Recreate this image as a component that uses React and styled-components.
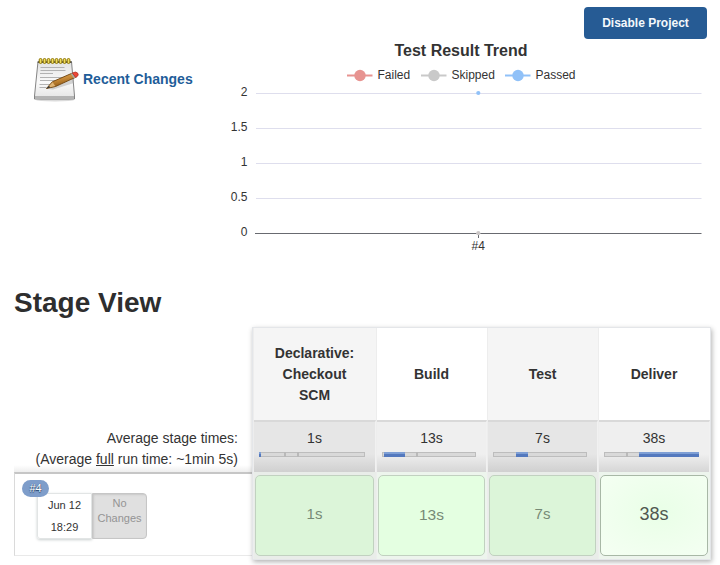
import React from "react";
import styled, { createGlobalStyle, css } from "styled-components";

const GlobalStyle = createGlobalStyle`
  *, *::before, *::after { box-sizing: border-box; }
  body {
    margin: 0;
    background: #fff;
    color: #333;
    font-family: "Liberation Sans", Arial, sans-serif;
    font-size: 14px;
    overflow: hidden;
  }
`;

const Page = styled.main`
  width: 720px;
  height: 565px;
  padding: 7px 9px 0 14px;
  overflow: hidden;
`;

const ActionBar = styled.header`
  display: flex;
  justify-content: flex-end;
  height: 32px;
  padding-right: 4px;
`;

const PrimaryButton = styled.button`
  width: 123px;
  height: 32px;
  padding: 0;
  border: 0;
  border-radius: 4px;
  background: #265b94;
  color: #f4f8fc;
  font: bold 12px/32px "Liberation Sans", Arial, sans-serif;
`;

const Summary = styled.section`
  display: flex;
  height: 221px;
`;

const ChangesLink = styled.a`
  display: flex;
  align-items: center;
  width: 206px;
  height: 48px;
  margin-top: 16px;
  padding-left: 18px;
  color: #1f5d99;
  font-weight: bold;
  gap: 3px;
  white-space: nowrap;
`;

const Chart = styled.svg`
  display: block;
  flex: none;
  font-family: "Liberation Sans", Arial, sans-serif;
  font-size: 12px;
  fill: #333;
`;

const Heading = styled.h2`
  height: 67px;
  margin: 0;
  padding-top: 26px;
  font-size: 28px;
  line-height: 34px;
  color: #2e2e2e;
`;

const StageView = styled.section`
  display: flex;
`;

const RunColumn = styled.div`
  width: 238px;
`;

const Averages = styled.div`
  height: 145px;
  padding: 101px 14px 0 0;
  text-align: right;
  line-height: 21px;
  background: linear-gradient(to top, #eee, rgba(255, 255, 255, 0) 7px);
`;

const Run = styled.div`
  height: 84px;
  padding: 6px 0 0 7px;
  border: solid #e9e9e9;
  border-width: 2px 0 1px 1px;
  border-top-color: #c6c6c6;
  border-left-color: #dadada;
`;

const RunNumber = styled.span`
  position: relative;
  z-index: 1;
  display: block;
  width: 27px;
  height: 17px;
  border-radius: 9px;
  background: #7e9dca;
  color: #fff;
  font-size: 11px;
  line-height: 17px;
  text-align: center;
  text-shadow: 0 1px 1px #29466d, 0 0 1px #29466d;
`;

const RunInfo = styled.div`
  display: flex;
  width: 110px;
  height: 46px;
  margin: -4px 0 0 15px;
  font-size: 11px;
  text-align: center;
`;

const Started = styled.div`
  width: 55px;
  height: 46px;
  border: 1px solid #e2e5e5;
  border-radius: 3px 0 0 3px;
  line-height: 22px;
  box-shadow: 0 1px 3px #c9cfcf;
`;

const Commits = styled.div`
  width: 55px;
  height: 46px;
  padding-top: 2px;
  border: 1px solid #c6c6c6;
  border-radius: 0 4px 4px 0;
  background: #e0e0e0;
  color: #949494;
  line-height: 15px;
  box-shadow: inset 1px 1px 2px #c8c8c8;
`;

const StageTable = styled.div`
  display: grid;
  grid-template-columns: 123px 111px 111px 112px;
  width: 459px;
  height: 233px;
  border: 1px solid #e4e6e9;
  background: #eee;
  box-shadow: 1px 2px 5px rgba(0, 0, 0, 0.3);
`;

const StageColumn = styled.div`
  display: grid;
  grid-template-rows: 92px 52px 87px;
  border-left: 1px solid #ededed;
  text-align: center;
`;

const StageName = styled.div`
  display: flex;
  align-items: center;
  justify-content: center;
  padding: 0 19px 0 18px;
  background: ${(p) => (p.$shaded ? "#f5f5f5" : "#fff")};
  font-weight: bold;
  line-height: 21px;
`;

const StageAverage = styled.div`
  padding: 6px 10px 0 5px;
  border-top: 2px solid #d9d9d9;
  border-right: 1px solid #f1f1f1;
  background: ${(p) =>
    p.$shaded
      ? "linear-gradient(#e6e6e6 0 64%, #d0d0d0)"
      : "linear-gradient(#efefef 0 64%, #d6d6d6)"};
  line-height: 21px;
  & > span { display: block; padding-left: 5px; }
`;

const Share = styled.svg`
  display: block;
  width: 100%;
  height: 5px;
  margin-top: 3px;
`;

const Cell = styled.div`
  display: flex;
  padding: 3px 2px 2px 1px;
  background: ${(p) => (p.$shaded ? "#e9ede9" : "#edf5ed")};
`;

const Duration = styled.div`
  flex: 1;
  height: 81px;
  border: 1px solid #c1d1c0;
  border-radius: 5px;
  background: ${(p) => (p.$shaded ? "#dcf5d9" : "#e4ffe1")};
  color: #778a76;
  font-size: ${(p) => p.$size}px;
  line-height: ${(p) => (p.$shaded ? 76 : 77)}px;
  ${(p) =>
    p.$latest &&
    css`
      border-color: #a8b8a6;
      background: radial-gradient(ellipse at 55% 45%, #e9ffe7, #f4fff2 90%);
      color: #505850;
    `}
`;

function NotepadIcon() {
  return (
    <svg width="48" height="48" viewBox="0 0 48 48" aria-hidden="true">
      <defs>
        <linearGradient id="paper" x2="0" y2="1">
          <stop stopColor="#e2e2e2" />
          <stop offset=".55" stopColor="#fafafa" />
          <stop offset="1" stopColor="#e4e4e4" />
        </linearGradient>
        <linearGradient id="pencil" x2=".4" y2="1">
          <stop stopColor="#e8b661" />
          <stop offset=".5" stopColor="#c88b39" />
          <stop offset="1" stopColor="#85500f" />
        </linearGradient>
      </defs>
      <ellipse cx="23" cy="45" rx="19" ry="1.5" fill="#ccc" opacity=".7" />
      <path d="M6 6.5h33.5l3 34.5v3H2.5v-3z" fill="url(#paper)" stroke="#777" strokeWidth=".9" />
      <path d="M3 41h39v2.7H3z" fill="#b4b4b4" />
      <path d="M5.7 6.5h34v1.4h-34z" fill="#555" />
      <path d="M8.5 12.5h24M8.5 15.5h25M8 18.5h13M8 22.5h24M8 25.5h15M7.5 29.5h13M7.5 32.5h7" stroke="#aaa" strokeWidth=".9" />
      {[7.2, 11.2, 15.2, 19.2, 23.2, 27.2, 31.2, 35.2].map((x) => (
        <rect key={x} x={x} y="3.5" width="2.7" height="5" rx="1.3" fill="#f0dc5c" stroke="#8b7405" strokeWidth="1" />
      ))}
      <path d="M16 34l26-10v4L21 34.5z" fill="#999" opacity=".4" />
      <path d="M14.5 33.5l5.8-6.7L40.5 18l3.2 4.3L23.5 31.5z" fill="url(#pencil)" stroke="#6d430f" strokeWidth=".9" />
      <path d="M15.2 33l5.4-5.8 2.7 3.9z" fill="#dfb474" />
      <path d="M14.5 33.5l2.4-2.7 1.4 1.8z" fill="#333" />
      <path d="M38.7 18.8l3 4.4 2-1-3-4.2z" fill="#aaa89e" />
      <path d="M40.4 18q3.6-2 5.2 0t-.6 3.7l-1.4.7z" fill="#ef4735" stroke="#a82f25" strokeWidth=".7" />
    </svg>
  );
}

const series = [
  { name: "Failed", x: 127, color: "#e79390" },
  { name: "Skipped", x: 201, color: "#c9c9c9" },
  { name: "Passed", x: 285, color: "#90c1f8" },
];

const ticks = ["2", "1.5", "1", "0.5", "0"];

function TrendChart() {
  return (
    <Chart width="490" height="221" viewBox="0 0 490 221">
      <text x="241" y="17" textAnchor="middle" fontSize="16" fontWeight="bold">Test Result Trend</text>
      {series.map(({ name, x, color }) => (
        <g key={name}>
          <path d={`M${x} 36.5h25.5`} stroke={color} strokeWidth="2" />
          <circle cx={x + 13} cy="36.5" r="5.7" fill={color} />
          <text x={x + 30.5} y="40">{name}</text>
        </g>
      ))}
      {ticks.map((label, i) => (
        <g key={label}>
          <text x="27.5" y={57 + i * 35} textAnchor="end">{label}</text>
          <path d={`M${i === 4 ? 35 : 36} ${54.5 + i * 35}H481.5`} stroke={i === 4 ? "#686a70" : "#dedeed"} />
        </g>
      ))}
      <path d="M258.5 194v5" stroke="#686a70" />
      <circle cx="258.3" cy="54" r="2.1" fill="#90c1f8" />
      <circle cx="258.3" cy="194.2" r="2.1" fill="#cbc7c7" />
      <text x="258.3" y="211" textAnchor="middle">#4</text>
    </Chart>
  );
}

function ShareBar({ width, start, length, marks }) {
  return (
    <Share viewBox={`0 0 ${width} 5`} preserveAspectRatio="none">
      <rect x=".5" y=".5" width={width - 1} height="4" fill="#d9d9d9" stroke="#bdbdbd" />
      {marks.map((x) => (
        <path key={x} d={`M${x} 0v5`} stroke="#b9b9b9" strokeWidth="2" />
      ))}
      <rect x={start} width={length} height="5" fill="#5479be" />
      <path d={`M${start} 1h${length}`} stroke="#7e9fd5" strokeWidth="2" />
    </Share>
  );
}

const stages = [
  { name: "Declarative: Checkout SCM", time: "1s", shaded: true, size: 15, bar: { width: 106, start: 0, length: 2, marks: [26, 39] } },
  { name: "Build", time: "13s", size: 15.5, bar: { width: 94, start: 2, length: 21, marks: [35] } },
  { name: "Test", time: "7s", shaded: true, size: 15, bar: { width: 94, start: 23, length: 12, marks: [] } },
  { name: "Deliver", time: "38s", size: 18, latest: true, bar: { width: 95, start: 35, length: 60, marks: [23] } },
];

export default function App() {
  return (
    <>
      <GlobalStyle />
      <Page>
        <ActionBar><PrimaryButton>Disable Project</PrimaryButton></ActionBar>
        <Summary>
          <ChangesLink><NotepadIcon />Recent Changes</ChangesLink>
          <TrendChart />
        </Summary>
        <Heading>Stage View</Heading>
        <StageView>
          <RunColumn>
            <Averages>
              <div>Average stage times:</div>
              <div>(Average <u>full</u> run time: ~1min 5s)</div>
            </Averages>
            <Run>
              <RunNumber>#4</RunNumber>
              <RunInfo>
                <Started><div>Jun 12</div><div>18:29</div></Started>
                <Commits><div>No</div><div>Changes</div></Commits>
              </RunInfo>
            </Run>
          </RunColumn>
          <StageTable>
            {stages.map((s) => (
              <StageColumn key={s.name}>
                <StageName $shaded={s.shaded}>{s.name}</StageName>
                <StageAverage $shaded={s.shaded}><span>{s.time}</span><ShareBar {...s.bar} /></StageAverage>
                <Cell $shaded={s.shaded}>
                  <Duration $shaded={s.shaded} $size={s.size} $latest={s.latest}>{s.time}</Duration>
                </Cell>
              </StageColumn>
            ))}
          </StageTable>
        </StageView>
      </Page>
    </>
  );
}
